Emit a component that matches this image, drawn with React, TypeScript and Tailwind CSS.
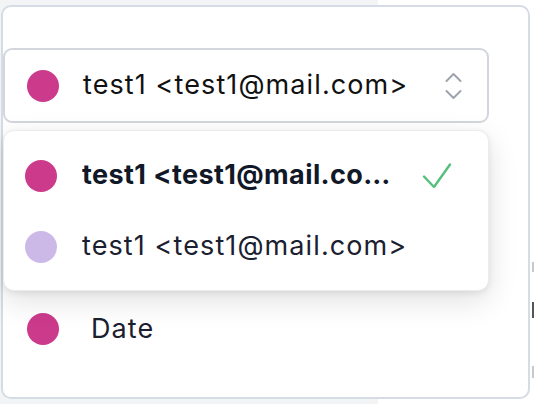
import React from "react";

const font = { fontFamily: "Inter, 'Noto Sans', sans-serif" };

function Dot({ color }: { color: string }) {
  return <span className={`block w-[32px] h-[32px] rounded-full shrink-0 ${color}`} />;
}

export default function App() {
  return (
    <div
      className="w-[535px] h-[404px] overflow-hidden flex bg-[linear-gradient(to_right,#f3f4f6_378px,#ffffff_378px)]"
      style={font}
    >
      <div className="ml-[1px] mt-[5px] w-[529px] h-[394px] shrink-0 border-2 border-[#d5dce6] rounded-[10px] bg-white flex flex-col">
        <div className="relative mt-[41px]">
          <div className="h-[75px] w-[486px] border-2 border-[#d3d7dd] rounded-[9px] flex items-center pl-[22px] pr-[25px]">
            <Dot color="bg-[#cc3a8b]" />
            <span className="ml-[24px] text-[27px] tracking-[1.1px] text-[#111111] flex-1 whitespace-nowrap">
              test1 &lt;test1@mail.com&gt;
            </span>
            <svg width="17" height="28" viewBox="0 0 17 28" fill="none" stroke="#9ca3af" strokeWidth="2" strokeLinecap="round" strokeLinejoin="round">
              <path d="M1.5 9 8.5 2l7 7" />
              <path d="M1.5 19l7 7 7-7" />
            </svg>
          </div>
          <div className="absolute left-0 top-full mt-[7px] w-[486px] bg-white border border-[#ececec] rounded-[11px] shadow-[0_10px_30px_rgba(0,0,0,0.12),0_2px_6px_rgba(0,0,0,0.08)] pt-[9px] pb-[8px] z-10">
            <div className="h-[71px] flex items-center pl-[21px] pr-[36px]">
              <Dot color="bg-[#cc3a8b]" />
              <span className="ml-[25px] w-[318px] text-[27px] font-bold tracking-[0.4px] text-[#111827] truncate">
                test1 &lt;test1@mail.com&gt;
              </span>
              <svg className="ml-auto" width="30" height="26" viewBox="0 0 30 26" fill="none" stroke="#55c07c" strokeWidth="2.4" strokeLinecap="round" strokeLinejoin="round">
                <path d="M2 13.5 12 24 28 1.5" />
              </svg>
            </div>
            <div className="h-[71px] flex items-center pl-[21px]">
              <Dot color="bg-[#cdb9e8]" />
              <span className="ml-[25px] text-[27px] tracking-[1.1px] text-[#1a2030] whitespace-nowrap">
                test1 &lt;test1@mail.com&gt;
              </span>
            </div>
          </div>
        </div>
        <div className="mt-[186px] flex items-center pl-[24px]">
          <Dot color="bg-[#cc3a8b]" />
          <span className="ml-[32px] text-[27px] tracking-[1.1px] text-[#1a2030]">Date</span>
        </div>
      </div>
      <div className="flex flex-col items-end flex-1 pr-[1px]">
        <span className="mt-[262px] block w-[2px] h-[10px] bg-[#c8c8c8]" />
        <span className="mt-[30px] block w-[2px] h-[16px] bg-[#555555]" />
        <span className="mt-[48px] block w-[2px] h-[12px] bg-[#c8c8c8]" />
      </div>
    </div>
  );
}
